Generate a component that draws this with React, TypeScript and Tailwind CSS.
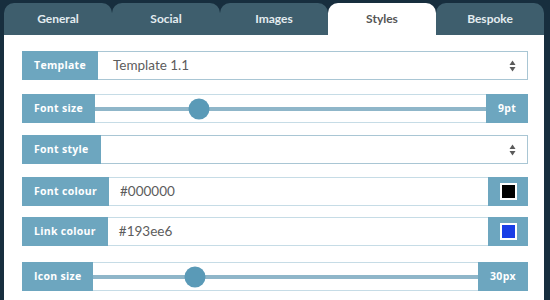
import React from "react";

const font = { fontFamily: "Lato, 'Open Sans', sans-serif" };
const osans = { fontFamily: "'Open Sans', Lato, sans-serif" };

function Label({ text }: { text: string }) {
  return (
    <div
      className="flex items-center px-3 bg-[#6da6bf] text-white text-[10.5px] font-bold h-full shrink-0 tracking-[0.3px]"
      style={osans}
    >
      {text}
    </div>
  );
}

function Arrows() {
  return (
    <svg width="7" height="12" viewBox="0 0 7 12" className="mr-[11px]">
      <path d="M3.5 0.5 L6.5 5 L0.5 5 Z" fill="#5a5a5a" />
      <path d="M3.5 11.5 L6.5 7 L0.5 7 Z" fill="#5a5a5a" />
    </svg>
  );
}

function SelectRow({ label, value, mt }: { label: string; value: string; mt: string }) {
  return (
    <div className={`flex h-[29px] ${mt}`}>
      <Label text={label} />
      <div className="flex-1 flex items-center justify-between border border-l-0 border-[#a9c6d4] bg-white">
        <span className="pl-[15px] text-[13.5px] text-[#5c5c5c]">{value}</span>
        <Arrows />
      </div>
    </div>
  );
}

function SliderRow({ label, value, pct, mt }: { label: string; value: string; pct: number; mt: string }) {
  return (
    <div className={`flex h-[29px] ${mt}`}>
      <Label text={label} />
      <div className="flex-1 relative border-y border-[#c6dce6] bg-white">
        <div className="absolute left-0 right-0 top-1/2 -translate-y-1/2 h-[4px] bg-[#8fb6c9]" />
        <div
          className="absolute top-1/2 -translate-y-1/2 -translate-x-1/2 w-[21px] h-[21px] rounded-full bg-[#5a9ab7]"
          style={{ left: `${pct}%` }}
        />
      </div>
      <div
        className="flex items-center px-3 bg-[#6da6bf] text-white text-[10.5px] font-bold tracking-[0.3px]"
        style={osans}
      >
        {value}
      </div>
    </div>
  );
}

function ColourRow({ label, value, colour, mt }: { label: string; value: string; colour: string; mt: string }) {
  return (
    <div className={`flex h-[29px] ${mt}`}>
      <Label text={label} />
      <div className="flex-1 flex items-center border-y border-[#c6dce6] bg-white">
        <span className="pl-[11px] text-[13.5px] text-[#5c5c5c]">{value}</span>
      </div>
      <div className="w-[40px] flex items-center justify-center bg-[#6da6bf]">
        <div className="w-[17px] h-[17px] border-2 border-white" style={{ backgroundColor: colour }} />
      </div>
    </div>
  );
}

export default function App() {
  const tabs = ["General", "Social", "Images", "Styles", "Bespoke"];
  return (
    <div className="w-[550px] h-[300px] overflow-hidden bg-[#172e3e] pl-[4px] pr-[6px] pt-[3px]" style={font}>
      <div className="flex">
        {tabs.map((t) => (
          <div
            key={t}
            className={
              t === "Styles"
                ? "w-[108px] h-[32px] rounded-t-[10px] bg-white text-[#555] text-[12px] font-bold flex items-center justify-center"
                : "w-[108px] h-[32px] rounded-t-[10px] bg-[#3e5e6d] text-[#e3ecf0] text-[12px] font-bold flex items-center justify-center"
            }
          >
            {t}
          </div>
        ))}
      </div>
      <div className="bg-white h-[270px] pl-[18px] pr-[16px] pt-[16px]">
        <SelectRow label="Template" value="Template 1.1" mt="" />
        <SliderRow label="Font size" value="9pt" pct={26.5} mt="mt-[14px]" />
        <SelectRow label="Font style" value="" mt="mt-[12px]" />
        <ColourRow label="Font colour" value="#000000" colour="#000000" mt="mt-[13px]" />
        <ColourRow label="Link colour" value="#193ee6" colour="#193ee6" mt="mt-[11px]" />
        <SliderRow label="Icon size" value="30px" pct={26.5} mt="mt-[16px]" />
      </div>
    </div>
  );
}
